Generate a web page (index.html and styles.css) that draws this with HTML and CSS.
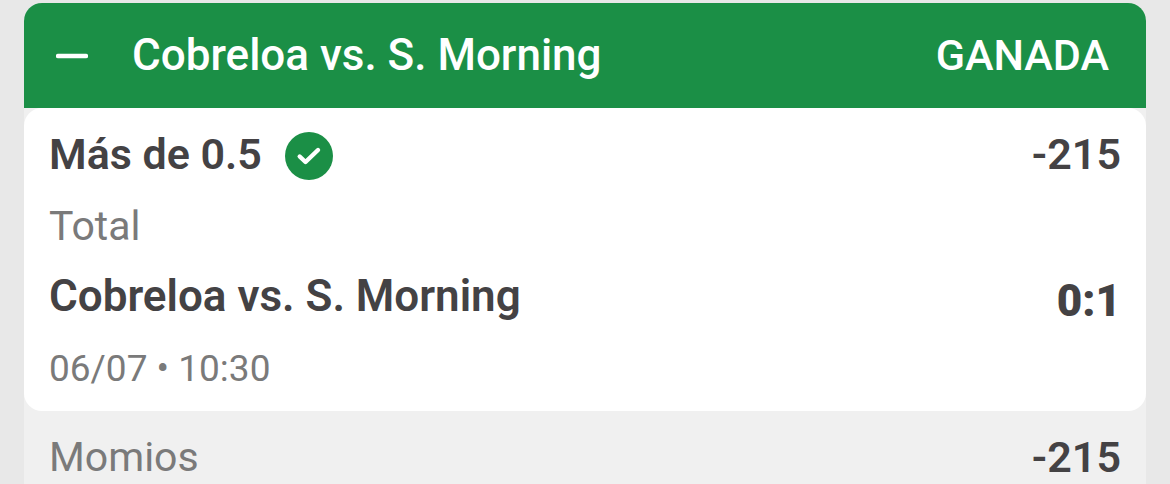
FILE: index.html
```html
<!DOCTYPE html>
<html lang="es">
<head>
<meta charset="utf-8">
<meta name="viewport" content="width=device-width, initial-scale=1">
<title>Apuesta ganada</title>
<link rel="stylesheet" href="styles.css">
</head>
<body>
<article class="bet">
  <header class="bet-header">
    <button class="toggle" type="button" aria-label="Contraer apuesta" aria-expanded="true">
      <svg class="toggle-icon" viewBox="0 0 32 32" aria-hidden="true"><path d="M2 17H30" stroke="currentColor" stroke-width="4.500" stroke-linecap="round"/></svg>
    </button>
    <h1 class="bet-title">Cobreloa vs. S. Morning</h1>
    <span class="bet-status">GANADA</span>
  </header>
  <section class="selection">
    <div class="row pick">
      <span class="pick-name">Más de 0.5
        <svg class="check" viewBox="0 0 48 48" role="img" aria-label="Acertada"><circle cx="24" cy="24" r="24" fill="#1b8f46"/><path d="M14.700 24.500L20.500 30L33 18" fill="none" stroke="#fff" stroke-width="4.400" stroke-linecap="round" stroke-linejoin="round"/></svg>
      </span>
      <span class="odds">-215</span>
    </div>
    <p class="market">Total</p>
    <div class="row match">
      <span class="teams">Cobreloa vs. S. Morning</span>
      <span class="score">0:1</span>
    </div>
    <p class="date">06/07 • 10:30</p>
  </section>
  <footer class="row summary">
    <span class="summary-label">Momios</span>
    <span class="odds">-215</span>
  </footer>
</article>
</body>
</html>
```
FILE: styles.css
```css
* {
  box-sizing: border-box;
}

body {
  margin: 0;
  padding: 3px 24px 0;
  background: #e8e8e8;
  color: #444244;
  font-family: Roboto, "Liberation Sans", sans-serif;
  font-size: 43px;
  line-height: 48px;
  overflow: hidden;
}

h1,
p {
  margin: 0;
}

.bet {
  border-radius: 18px 18px 0 0;
  background: #f0f0f0;
}

.bet-header {
  display: flex;
  align-items: center;
  padding: 28px 37px 29px 32px;
  border-radius: 18px 18px 0 0;
  background: #1b8f46;
  color: #fff;
}

.toggle {
  display: flex;
  margin: 0 44px 0 0;
  padding: 0;
  border: 0;
  background: none;
  color: inherit;
}

.toggle-icon {
  width: 32px;
  height: 32px;
}

.bet-title {
  flex: 1;
  font-size: 44px;
  font-weight: 500;
}

.bet-status {
  font-weight: 500;
}

.selection {
  padding: 22px 25px 18px;
  border-radius: 18px;
  background: #fff;
}

.row {
  display: flex;
  align-items: flex-start;
  justify-content: space-between;
}

.pick-name {
  display: flex;
  align-items: flex-start;
  gap: 23px;
  font-weight: 600;
}

.check {
  width: 48px;
  height: 48px;
  margin-top: 2px;
}

.odds {
  font-weight: 600;
}

.teams {
  font-size: 44px;
  font-weight: 600;
}

.market,
.summary-label {
  color: #7a7a7a;
  font-size: 41px;
}

.market {
  margin-top: 22px;
}

.match {
  margin-top: 22px;
}

.score {
  padding-top: 5px;
  font-size: 44px;
  font-weight: 900;
}

.date {
  margin-top: 20px;
  color: #7a7a7a;
  font-size: 37px;
}

.summary {
  padding: 22px 25px;
}
```
